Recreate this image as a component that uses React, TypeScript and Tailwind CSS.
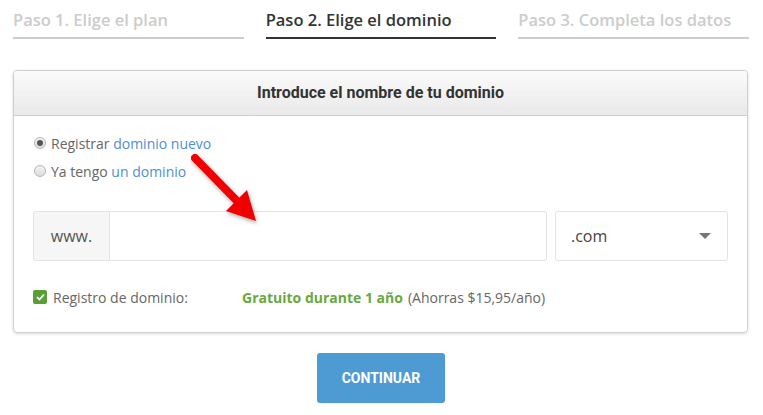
import React from "react";

export default function App() {
  const steps = [
    { t: "Paso 1. Elige el plan", active: false },
    { t: "Paso 2. Elige el dominio", active: true },
    { t: "Paso 3. Completa los datos", active: false },
  ];
  return (
    <div className="relative w-[763px] h-[415px] bg-white overflow-hidden" style={{ fontFamily: '"Open Sans", sans-serif' }}>
      <div className="grid grid-cols-3 gap-[22px] pl-[13px] pr-[14px]">
        {steps.map((s) => (
          <div
            key={s.t}
            className={`pt-[9px] pb-[6px] text-[16.5px] leading-[22px] font-semibold whitespace-nowrap border-b-2 ${
              s.active ? "text-[#333] border-[#333]" : "text-[#ccc] border-[#ccc]"
            }`}
          >
            {s.t}
          </div>
        ))}
      </div>

      <div className="ml-[13px] mt-[31px] w-[735px] border border-[#cfcfcf] rounded-[4px] shadow-[0_1px_3px_rgba(0,0,0,0.15)]">
        <div
          className="h-[45px] flex items-center justify-center border-b border-[#cfcfcf] rounded-t-[4px] bg-gradient-to-b from-[#fbfbfb] to-[#e9e9e9] text-[16px] font-bold text-[#333]"
          style={{ fontFamily: "Roboto, sans-serif" }}
        >
          Introduce el nombre de tu dominio
        </div>
        <div className="px-[19px] pt-[13px] pb-[25px] text-[14px] text-[#666]">
          <div className="flex items-center h-[28px]">
            <span className="w-[12px] h-[12px] rounded-full border border-[#b5b5b5] bg-gradient-to-b from-[#f4f4f4] to-[#dcdcdc] flex items-center justify-center mr-[5px] ml-[1px]">
              <span className="w-[6px] h-[6px] rounded-full bg-[#555]" />
            </span>
            <span>
              Registrar <span className="text-[#4f8fd3]">dominio nuevo</span>
            </span>
          </div>
          <div className="flex items-center h-[28px]">
            <span className="w-[12px] h-[12px] rounded-full border border-[#b5b5b5] bg-gradient-to-b from-[#f4f4f4] to-[#dcdcdc] mr-[5px] ml-[1px]" />
            <span>
              Ya tengo <span className="text-[#4f8fd3]">un dominio</span>
            </span>
          </div>

          <div className="flex mt-[26px] h-[50px]">
            <div className="w-[77px] flex items-center justify-center bg-[#f6f6f6] border border-[#e3e3e3] rounded-l-[3px] text-[16px] text-[#555]">
              www.
            </div>
            <div className="w-[437px] border border-l-0 border-[#e3e3e3] rounded-r-[3px] bg-white" />
            <div className="ml-[8px] w-[173px] border border-[#e3e3e3] rounded-[3px] flex items-center justify-between pl-[15px] pr-[16px] text-[16px] text-[#444]">
              <span>.com</span>
              <svg width="12" height="7" viewBox="0 0 12 7">
                <path d="M0 0 H12 L6 6 Z" fill="#777" />
              </svg>
            </div>
          </div>

          <div className="flex items-center mt-[26px] h-[20px]">
            <span className="w-[14px] h-[14px] rounded-[2px] bg-[#5a9e3a] flex items-center justify-center mr-[6px]">
              <svg width="9" height="8" viewBox="0 0 9 8">
                <path d="M1 4.2 L3.5 6.5 L8 1.5" stroke="#fff" strokeWidth="1.8" fill="none" />
              </svg>
            </span>
            <span className="w-[189px]">Registro de dominio:</span>
            <span className="font-bold text-[#69a83f]">Gratuito durante 1 año</span>
            <span className="ml-[5px]">(Ahorras $15,95/año)</span>
          </div>
        </div>
      </div>

      <div className="flex justify-center mt-[20px] pr-[1px]">
        <button
          className="w-[128px] h-[50px] rounded-[3px] bg-[#4e9bd4] text-white text-[14px] font-bold"
          style={{ fontFamily: "Roboto, sans-serif" }}
        >
          CONTINUAR
        </button>
      </div>

      <svg className="absolute left-0 top-0 pointer-events-none" width="763" height="415" style={{ filter: "drop-shadow(1px 2px 2px rgba(0,0,0,0.35))" }}>
        <line x1="195" y1="158" x2="238" y2="202" stroke="#f00000" strokeWidth="8" strokeLinecap="round" />
        <path d="M256 221 L247 190 L226 211 Z" fill="#f00000" />
      </svg>
    </div>
  );
}
